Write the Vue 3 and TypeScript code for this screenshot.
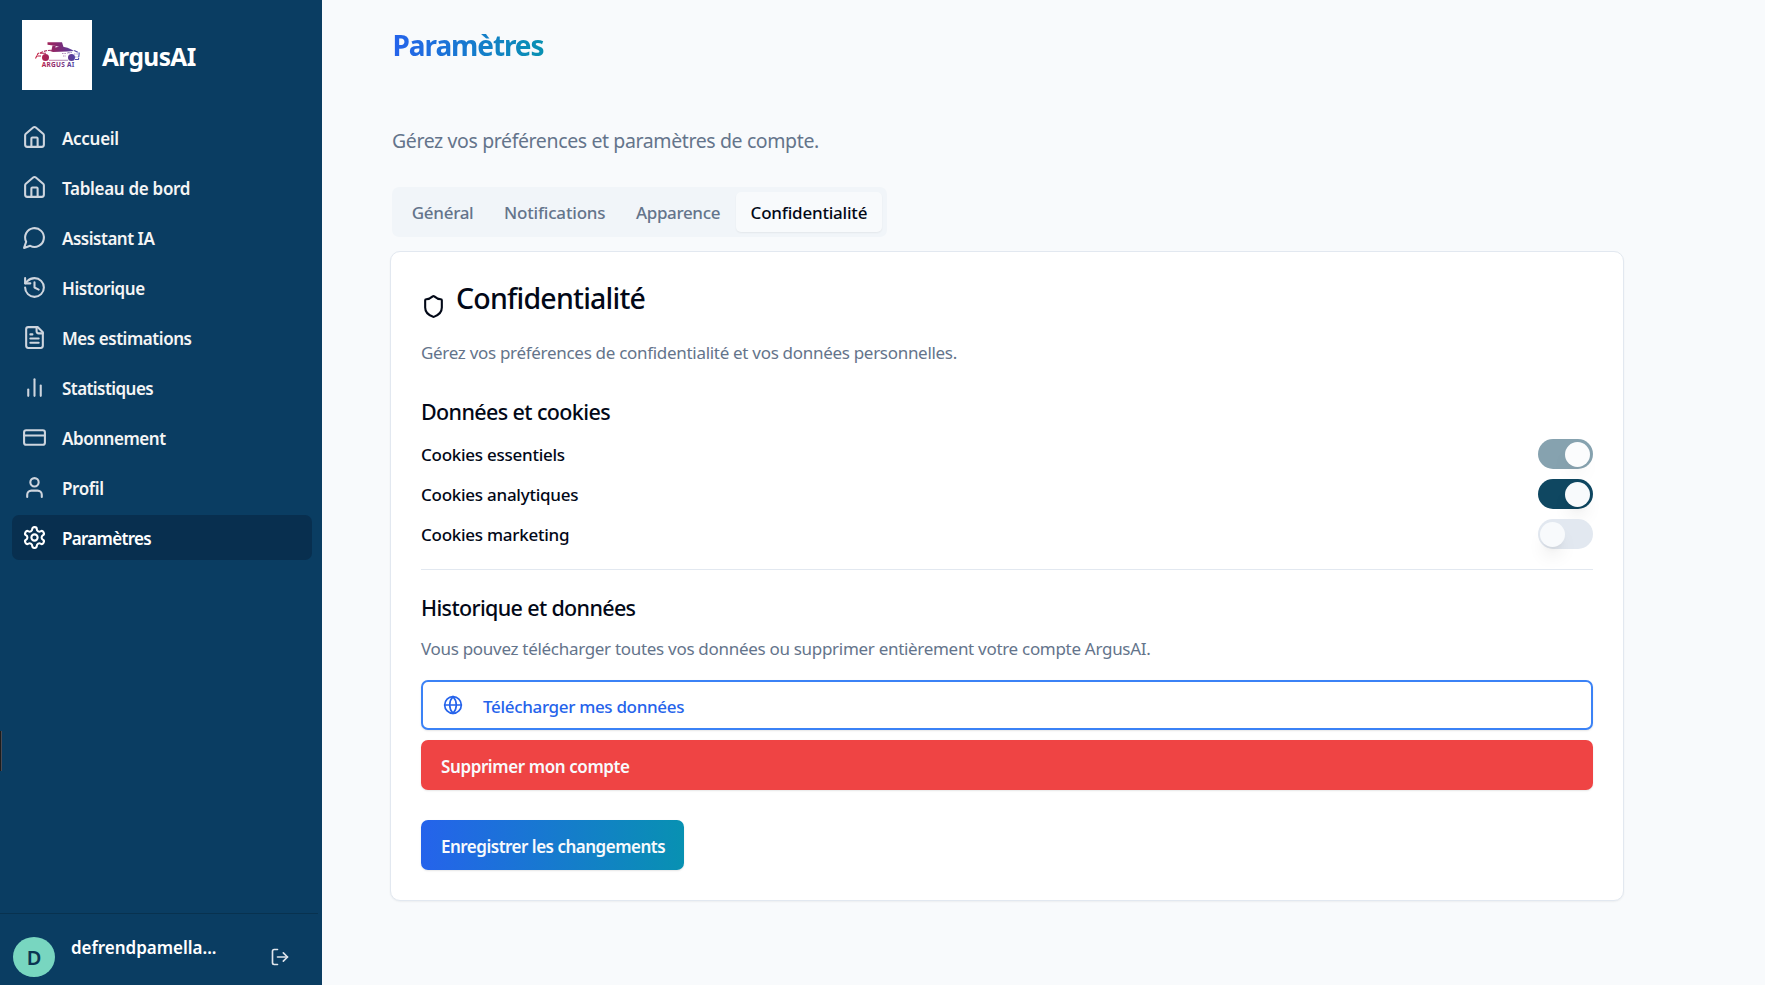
<script setup lang="ts">
import { ref } from 'vue'

interface NavItem {
  label: string
  tracking: number
  paths: string[]
}

const home = [
  'M15 21v-8a1 1 0 0 0-1-1h-4a1 1 0 0 0-1 1v8',
  'M3 10a2 2 0 0 1 .709-1.528l7-5.999a2 2 0 0 1 2.582 0l7 5.999A2 2 0 0 1 21 10v9a2 2 0 0 1-2 2H5a2 2 0 0 1-2-2z',
]

const navItems: NavItem[] = [
  { label: 'Accueil', tracking: -0.3, paths: home },
  { label: 'Tableau de bord', tracking: -0.3, paths: home },
  { label: 'Assistant IA', tracking: -0.48, paths: ['M7.9 20A9 9 0 1 0 4 16.1L2 22Z'] },
  {
    label: 'Historique',
    tracking: -0.43,
    paths: ['M3 12a9 9 0 1 0 9-9 9.75 9.75 0 0 0-6.74 2.74L3 8', 'M3 3v5h5', 'M12 7v5l4 2'],
  },
  {
    label: 'Mes estimations',
    tracking: -0.45,
    paths: [
      'M15 2H6a2 2 0 0 0-2 2v16a2 2 0 0 0 2 2h12a2 2 0 0 0 2-2V7Z',
      'M14 2v4a2 2 0 0 0 2 2h4',
      'M10 9H8',
      'M16 13H8',
      'M16 17H8',
    ],
  },
  { label: 'Statistiques', tracking: -0.56, paths: ['M18 20V10', 'M12 20V4', 'M6 20v-6'] },
  {
    label: 'Abonnement',
    tracking: -0.46,
    paths: ['M4 5h16a2 2 0 0 1 2 2v10a2 2 0 0 1-2 2H4a2 2 0 0 1-2-2V7a2 2 0 0 1 2-2Z', 'M2 10h20'],
  },
  {
    label: 'Profil',
    tracking: -0.38,
    paths: ['M19 21v-2a4 4 0 0 0-4-4H9a4 4 0 0 0-4 4v2', 'M8 7a4 4 0 1 0 8 0a4 4 0 1 0-8 0'],
  },
  {
    label: 'Paramètres',
    tracking: -0.7,
    paths: [
      'M12.22 2h-.44a2 2 0 0 0-2 2v.18a2 2 0 0 1-1 1.73l-.43.25a2 2 0 0 1-2 0l-.15-.08a2 2 0 0 0-2.73.73l-.22.38a2 2 0 0 0 .73 2.73l.15.1a2 2 0 0 1 1 1.72v.51a2 2 0 0 1-1 1.74l-.15.09a2 2 0 0 0-.73 2.73l.22.38a2 2 0 0 0 2.73.73l.15-.08a2 2 0 0 1 2 0l.43.25a2 2 0 0 1 1 1.73V20a2 2 0 0 0 2 2h.44a2 2 0 0 0 2-2v-.18a2 2 0 0 1 1-1.73l.43-.25a2 2 0 0 1 2 0l.15.08a2 2 0 0 0 2.73-.73l.22-.39a2 2 0 0 0-.73-2.73l-.15-.08a2 2 0 0 1-1-1.74v-.5a2 2 0 0 1 1-1.74l.15-.09a2 2 0 0 0 .73-2.73l-.22-.38a2 2 0 0 0-2.73-.73l-.15.08a2 2 0 0 1-2 0l-.43-.25a2 2 0 0 1-1-1.73V4a2 2 0 0 0-2-2z',
      'M9 12a3 3 0 1 0 6 0a3 3 0 1 0-6 0',
    ],
  },
]
const activeNav = ref('Paramètres')

const tabs = [
  { label: 'Général', tracking: -0.3 },
  { label: 'Notifications', tracking: -0.18 },
  { label: 'Apparence', tracking: -0.35 },
  { label: 'Confidentialité', tracking: -0.21 },
]
const activeTab = ref('Confidentialité')

const cookies = ref([
  { label: 'Cookies essentiels', on: true, locked: true },
  { label: 'Cookies analytiques', on: true, locked: false },
  { label: 'Cookies marketing', on: false, locked: false },
])
</script>

<template>
  <div class="app">
    <aside class="sidebar">
      <div class="brand">
        <svg class="logo" viewBox="0 0 70 70">
          <defs>
            <linearGradient id="brand-fill" gradientUnits="userSpaceOnUse" x1="13" y1="0" x2="58" y2="0">
              <stop offset="0" stop-color="#c8203f" />
              <stop offset="0.5" stop-color="#85286f" />
              <stop offset="1" stop-color="#3f4bb4" />
            </linearGradient>
          </defs>
          <rect width="70" height="70" fill="#fff" />
          <g fill="url(#brand-fill)">
            <path d="M25.500 22.300h14.500l1.500 4.600-3.500.3-5-1.400-7.500-1z" />
            <path d="M28 31l5-3.600c6-1.600 13-.8 19 3.600l-7 .6-14 .3z" />
            <path d="M30.500 25.500h3.500l-1.500 4.500h-3z" />
            <circle cx="23.500" cy="37.400" r="3.500" />
            <circle cx="49.500" cy="37.400" r="3.500" />
          </g>
          <g fill="none" stroke="url(#brand-fill)" stroke-width="1.100">
            <path d="M13.500 38.500l2.500-5 8-2.800 5-.5" stroke-dasharray="3 1" />
            <path d="M14.500 36h4.500M18 33.300h6" />
            <path d="M27 40.300h19" stroke-opacity=".55" />
            <path d="M53 39.500h3.500l.7-6.500-5-2.500" stroke-dasharray="5 .8" />
            <path d="M40 33.500h4m2-1h4m2 1.500h4m-15 2h3m9 1h4m-12-4h3" stroke-opacity=".55" stroke-dasharray="1.500 .9" />
          </g>
          <text x="19.800" y="47.300" textLength="32.500" fill="url(#brand-fill)" class="logo-text">ARGUS AI</text>
        </svg>
        <span class="brand-name">ArgusAI</span>
      </div>

      <nav class="nav">
        <a v-for="item in navItems" :key="item.label" class="nav-item" :class="{ active: item.label === activeNav }"
          @click="activeNav = item.label">
          <svg class="nav-icon" viewBox="0 0 24 24">
            <path v-for="d in item.paths" :key="d" :d="d" />
          </svg>
          <span class="nav-label" :style="{ letterSpacing: item.tracking + 'px' }">{{ item.label }}</span>
        </a>
      </nav>

      <div class="account">
        <div class="avatar">D</div>
        <span class="account-name">defrendpamella...</span>
        <svg class="logout" viewBox="0 0 24 24">
          <path d="M9 21H5a2 2 0 0 1-2-2V5a2 2 0 0 1 2-2h4" />
          <path d="M16 17l5-5-5-5" />
          <path d="M21 12H9" />
        </svg>
      </div>
      <span class="edge-handle"></span>
    </aside>

    <main class="content">
      <h1 class="title">Paramètres</h1>
      <p class="subtitle">Gérez vos préférences et paramètres de compte.</p>

      <div class="tabs">
        <button v-for="tab in tabs" :key="tab.label" class="tab" :class="{ selected: tab.label === activeTab }"
          :style="{ letterSpacing: tab.tracking + 'px' }" @click="activeTab = tab.label">{{ tab.label }}</button>
      </div>

      <section class="card">
        <h2 class="card-title">
          <svg class="shield" viewBox="0 0 24 24">
            <path
              d="M20 13c0 5-3.500 7.500-7.660 8.950a1 1 0 0 1-.67-.01C7.500 20.500 4 18 4 13V6a1 1 0 0 1 1-1c2 0 4.500-1.200 6.240-2.720a1.170 1.170 0 0 1 1.520 0C14.510 3.810 17 5 19 5a1 1 0 0 1 1 1z" />
          </svg>
          <span>Confidentialité</span>
        </h2>
        <p class="muted intro">Gérez vos préférences de confidentialité et vos données personnelles.</p>

        <h3 class="section-title">Données et cookies</h3>
        <div class="cookie-list">
          <div v-for="cookie in cookies" :key="cookie.label" class="cookie">
            <span class="cookie-label">{{ cookie.label }}</span>
            <button class="switch" :class="{ on: cookie.on, locked: cookie.locked }" :disabled="cookie.locked"
              @click="cookie.on = !cookie.on"><span class="thumb"></span></button>
          </div>
        </div>

        <hr class="divider" />

        <h3 class="section-title history">Historique et données</h3>
        <p class="muted history-text">Vous pouvez télécharger toutes vos données ou supprimer entièrement votre compte ArgusAI.</p>

        <button class="btn download">
          <svg class="globe" viewBox="0 0 24 24">
            <circle cx="12" cy="12" r="10" />
            <path d="M12 2a14.500 14.500 0 0 0 0 20 14.500 14.500 0 0 0 0-20" />
            <path d="M2 12h20" />
          </svg>
          <span>Télécharger mes données</span>
        </button>
        <button class="btn danger"><span>Supprimer mon compte</span></button>
        <button class="btn save"><span>Enregistrer les changements</span></button>
      </section>
    </main>
  </div>
</template>

<style>
body {
  margin: 0;
  background: #f8fafc;
}
</style>

<style scoped>
.app {
  display: flex;
  width: 100%;
  height: 985px;
  overflow: hidden;
  font-family: "Noto Sans", "Open Sans", sans-serif;
  font-size: 17px;
  color: #020817;
  background: #f8fafc;
}

.app * {
  box-sizing: border-box;
}

h1, h2, h3, p {
  margin: 0;
}

button {
  font: inherit;
  border: 0;
  padding: 0;
  cursor: pointer;
}

svg {
  flex: none;
  fill: none;
  stroke: currentColor;
  stroke-width: 2;
  stroke-linecap: round;
  stroke-linejoin: round;
}

.sidebar {
  position: relative;
  display: flex;
  flex-direction: column;
  flex: none;
  width: 322px;
  background: #0a3d62;
  color: #f5f5f5;
}

.brand {
  display: flex;
  align-items: center;
  gap: 10px;
  padding: 20px 22px 25px;
}

.logo {
  width: 70px;
  height: 70px;
  stroke: none;
  stroke-linecap: butt;
}

.logo-text {
  font-size: 6.5px;
  font-weight: 700;
}

.brand-name {
  padding-top: 3px;
  font-size: 24.5px;
  font-weight: 700;
  line-height: 30px;
  letter-spacing: -0.6px;
  color: #fff;
}

.nav {
  display: flex;
  flex-direction: column;
  gap: 5px;
  padding: 0 10px 0 12px;
}

.nav-item {
  display: flex;
  align-items: center;
  gap: 15px;
  height: 45px;
  padding-left: 10px;
  border-radius: 7px;
  cursor: pointer;
}

.nav-item.active {
  background: #082f4f;
  color: #fff;
}

.nav-icon {
  width: 25px;
  height: 25px;
  stroke-width: 2;
  color: #ced5de;
}

.active .nav-icon {
  color: #fff;
}

.nav-label {
  padding-top: 2px;
  font-weight: 600;
  line-height: 24px;
}

.account {
  display: flex;
  align-items: center;
  height: 72px;
  margin: auto 4px 0 0;
  padding: 15px 28px 0 13px;
  border-top: 1px solid #08324f;
}

.avatar {
  width: 42px;
  height: 40px;
  border-radius: 50%;
  background: #78d6c0;
  color: #0a3352;
  font-size: 20px;
  font-weight: 600;
  line-height: 41px;
  text-align: center;
}

.account-name {
  flex: 1;
  padding: 0 0 19px 16px;
  font-weight: 600;
  line-height: 24px;
  letter-spacing: -0.02px;
  color: #fff;
}

.logout {
  width: 20px;
  height: 20px;
  color: #dfe5ec;
}

.edge-handle {
  position: absolute;
  left: 0;
  top: 731px;
  width: 2px;
  height: 40px;
  background: #1c1c1c;
  border-right: 1px solid #4b4b53;
}

.content {
  flex: 1;
  padding: 25px 141px 0 68px;
}

.title {
  width: max-content;
  margin-left: 2.5px;
  font-size: 28px;
  font-weight: 700;
  line-height: 40px;
  letter-spacing: -1.08px;
  background: linear-gradient(90deg, #2563eb, #0891b2);
  -webkit-background-clip: text;
  background-clip: text;
  color: transparent;
}

.subtitle {
  margin: 60px 0 0 2px;
  font-size: 19.5px;
  line-height: 32px;
  letter-spacing: -0.385px;
  color: #64748b;
}

.tabs {
  display: flex;
  align-items: center;
  justify-content: space-between;
  width: 495px;
  height: 50px;
  margin: 30px 0 14px 2px;
  padding: 5px;
  border-radius: 7px;
  background: #f1f5f9;
}

.tab {
  height: 40px;
  padding: 1px 14.8px 0;
  border-radius: 5px;
  background: transparent;
  font-weight: 500;
  color: #64748b;
}

.tab.selected {
  background: #f8fafc;
  color: #020817;
  box-shadow: 0 1px 2px rgb(0 0 0 / 6%);
}

.card {
  height: 650px;
  padding: 30px;
  border: 1px solid #e2e8f0;
  border-radius: 10px;
  background: #fff;
  box-shadow: 0 1px 2px rgb(0 0 0 / 5%);
}

.card-title {
  display: flex;
  gap: 10px;
  height: 38px;
  font-size: 28.5px;
  font-weight: 500;
  line-height: 32px;
  letter-spacing: -0.77px;
}

.shield {
  width: 25px;
  height: 25px;
  margin-top: 12px;
  stroke-width: 2;
}

.muted {
  font-size: 17px;
  line-height: 24px;
  letter-spacing: -0.3px;
  color: #64748b;
}

.intro {
  margin-top: 21px;
}

.section-title {
  margin-top: 32px;
  font-size: 21.5px;
  font-weight: 500;
  line-height: 30px;
  letter-spacing: -0.62px;
}

.cookie-list {
  display: grid;
  gap: 10px;
  margin-top: 12px;
}

.cookie {
  display: flex;
  align-items: center;
  justify-content: space-between;
  height: 30px;
}

.cookie-label {
  padding-top: 1px;
  font-weight: 500;
  letter-spacing: -0.26px;
}

.switch {
  display: flex;
  align-items: center;
  width: 55px;
  height: 30px;
  padding: 1px 2px 0;
  border-radius: 15px;
  background: #e2e8f0;
}

.switch.on {
  justify-content: flex-end;
  padding-right: 3px;
  background: #0f4761;
}

.switch.locked {
  opacity: 0.5;
}

.thumb {
  width: 25px;
  height: 25px;
  border-radius: 50%;
  background: #f8fafc;
  box-shadow: 0 12px 18px -4px rgb(0 0 0 / 10%), 0 5px 7px -5px rgb(0 0 0 / 10%);
}

.divider {
  height: 1px;
  margin: 20px 0 0;
  border: 0;
  background: #e2e8f0;
}

.section-title.history {
  margin-top: 23px;
  letter-spacing: -0.65px;
}

.history-text {
  margin-top: 14px;
}

.btn {
  display: flex;
  align-items: center;
  width: 100%;
  height: 50px;
  padding: 2px 20px 0;
  border-radius: 7px;
  font-weight: 600;
  box-shadow: 0 1px 2px rgb(0 0 0 / 10%);
}

.download {
  gap: 20px;
  margin-top: 19px;
  padding-top: 0;
  border: 2px solid #3b82f6;
  background: #fff;
  color: #2563eb;
  font-weight: 500;
  letter-spacing: -0.33px;
}

.download span {
  padding-top: 2px;
}

.globe {
  width: 20px;
  height: 20px;
}

.danger {
  margin-top: 10px;
  background: #ef4444;
  color: #f8fafc;
  letter-spacing: -0.4px;
}

.save {
  width: 263px;
  margin-top: 30px;
  background: linear-gradient(90deg, #2563eb, #0891b2);
  color: #f8fafc;
  letter-spacing: -0.5px;
  white-space: nowrap;
}
</style>
